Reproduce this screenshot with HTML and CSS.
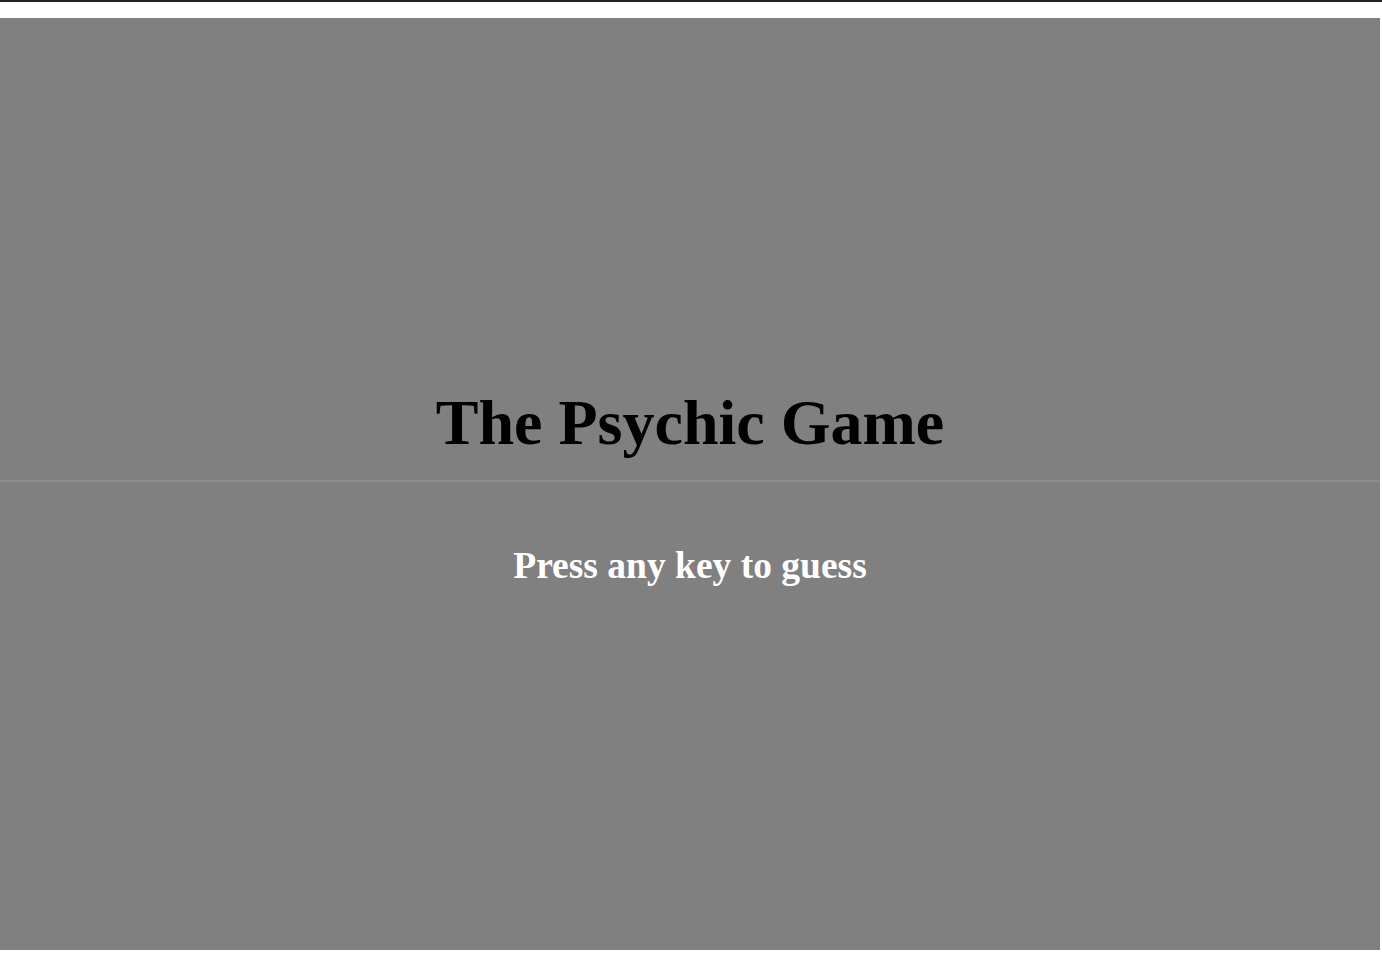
FILE: index.html
```html
<!DOCTYPE html>
<html lang="en">
<head>
<meta charset="utf-8">
<title>The Psychic Game</title>
<link rel="stylesheet" href="styles.css">
</head>
<body>
<div class="topbar"></div>
<main class="stage">
  <h1 class="title">The Psychic Game</h1>
  <hr class="divider">
  <h2 class="prompt">Press any key to guess</h2>
</main>
</body>
</html>
```
FILE: styles.css
```css
html, body {
  margin: 0;
  padding: 0;
  background: #ffffff;
}
body {
  font-family: "Liberation Serif", "Times New Roman", serif;
}
.topbar {
  height: 2px;
  background: #222222;
}
.stage {
  box-sizing: border-box;
  margin-top: 16px;
  width: 1380px;
  height: 932px;
  padding-top: 373px;
  background: #808080;
  display: flex;
  flex-direction: column;
  align-items: stretch;
}
.title {
  margin: 0;
  font-size: 64px;
  font-weight: bold;
  color: #000000;
  text-align: center;
  line-height: 64px;
}
.divider {
  width: 100%;
  height: 2px;
  margin: 25px 0 0 0;
  border: 0;
  background: #8e8e8e;
}
.prompt {
  margin: 65px 0 0 0;
  font-size: 37.5px;
  font-weight: bold;
  color: #ffffff;
  text-align: center;
  line-height: 37.5px;
}
```
